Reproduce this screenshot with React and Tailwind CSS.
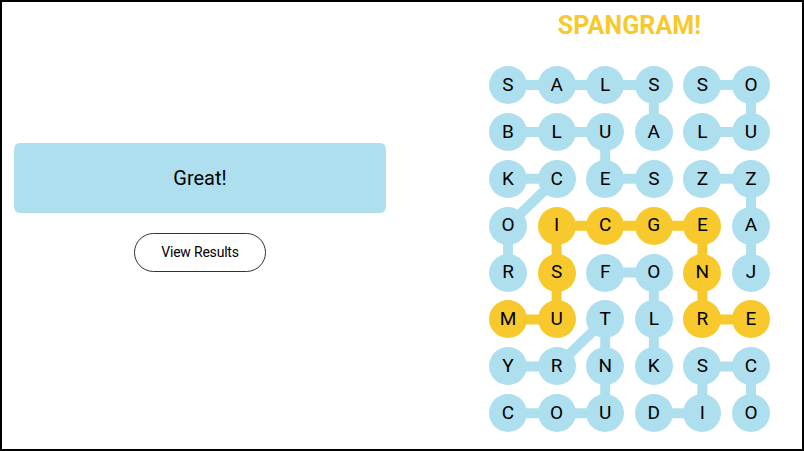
import React from "react";

const grid = [
  "SALSSO",
  "BLUALU",
  "KCESZZ",
  "OICGEA",
  "RSFONJ",
  "MUTLRE",
  "YRNKSC",
  "COUDIO",
];

// found word cells, spangram in yellow
const spangram = [[5, 0], [5, 1], [4, 1], [3, 1], [3, 2], [3, 3], [3, 4], [4, 4], [5, 4], [5, 5]];
const words = [
  [[0, 0], [0, 1], [0, 2], [0, 3], [1, 3]],
  [[1, 0], [1, 1], [1, 2], [2, 2], [2, 3]],
  [[0, 4], [0, 5], [1, 5], [1, 4]],
  [[4, 0], [3, 0], [2, 1], [2, 0]],
  [[4, 5], [3, 5], [2, 5], [2, 4]],
  [[4, 2], [4, 3], [5, 3], [6, 3]],
  [[7, 0], [7, 1], [7, 2], [6, 2], [5, 2], [6, 1], [6, 0]],
  [[7, 3], [7, 4], [6, 4], [6, 5], [7, 5]],
];

const CELL = 38;
const SX = 48.6;
const SY = 46.9;
const BLUE = "#aedfee";
const YELLOW = "#f8c92c";

const yellowSet = new Set(spangram.map(([r, c]) => `${r}-${c}`));
const pt = ([r, c]) => [c * SX + CELL / 2, r * SY + CELL / 2];

function Connectors() {
  const paths = [...words.map((w) => [w, BLUE]), [spangram, YELLOW]];
  return (
    <svg className="absolute inset-0" width="281" height="367">
      {paths.map(([w, color], i) => (
        <polyline
          key={i}
          points={w.map((p) => pt(p).join(",")).join(" ")}
          fill="none"
          stroke={color}
          strokeWidth="10"
          strokeLinejoin="round"
        />
      ))}
    </svg>
  );
}

export default function App() {
  return (
    <div
      className="w-[804px] h-[451px] border-2 border-black bg-white flex text-black"
      style={{ fontFamily: "Roboto, 'Liberation Sans', sans-serif" }}
    >
      {/* left: result + button */}
      <div className="w-[398px] pl-3 pt-[141px] flex flex-col">
        <div className="w-[372px] h-[70px] rounded-md bg-[#aedfee] flex items-center justify-center text-[20px]">
          Great!
        </div>
        <div className="w-[372px] flex justify-center mt-5">
          <button className="w-[132px] h-[39px] rounded-full border border-[#333] text-[14px] tracking-[-0.2px]">
            View Results
          </button>
        </div>
      </div>

      {/* right: board */}
      <div className="flex-1 pl-[89px] pt-[9px] flex flex-col items-start">
        <div className="w-[281px] text-center text-[25px] leading-[30px] font-bold text-[#f8c92c] tracking-[0.1px]">
          SPANGRAM!
        </div>
        <div className="relative mt-[25px] w-[281px]">
          <Connectors />
          <div className="relative grid grid-cols-[repeat(6,38px)] gap-x-[10.6px] gap-y-[8.9px]">
            {grid.map((row, r) =>
              row.split("").map((ch, c) => (
                <div
                  key={`${r}-${c}`}
                  className={`w-[38px] h-[38px] rounded-full flex items-center justify-center text-[19px] ${
                    yellowSet.has(`${r}-${c}`) ? "bg-[#f8c92c]" : "bg-[#aedfee]"
                  }`}
                >
                  {ch}
                </div>
              ))
            )}
          </div>
        </div>
      </div>
    </div>
  );
}
